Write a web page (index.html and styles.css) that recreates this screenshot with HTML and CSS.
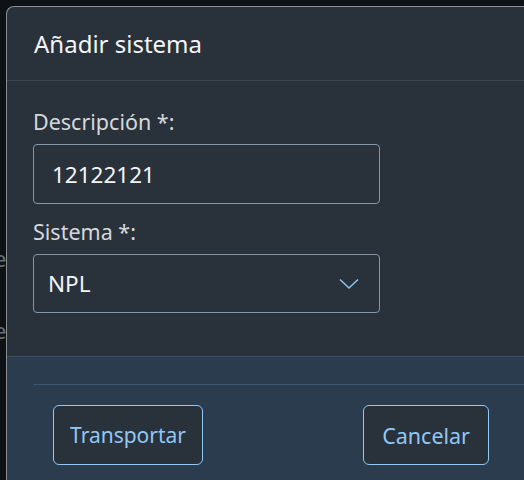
FILE: index.html
```html
<!DOCTYPE html>
<html lang="es">
<head>
<meta charset="utf-8">
<title>Añadir sistema</title>
<link rel="stylesheet" href="styles.css">
</head>
<body>
<div class="backdrop">
  <div class="bg-row">e</div>
  <div class="bg-row">e</div>
</div>
<div class="dialog">
  <header class="dlg-header">
    <h1 class="dlg-title">Añadir sistema</h1>
  </header>
  <section class="dlg-content">
    <label class="field-label">Descripción *:</label>
    <div class="field-box"><span class="field-value">12122121</span></div>
    <label class="field-label label-second">Sistema *:</label>
    <div class="field-box select-box">
      <span class="field-value">NPL</span>
      <svg class="chevron" width="20" height="12" viewBox="0 0 20 12"><path d="M1 1.5 L10 10 L19 1.5" fill="none" stroke="#8cc2f0" stroke-width="1.6"/></svg>
    </div>
  </section>
  <footer class="dlg-footer">
    <div class="footer-line"></div>
    <div class="footer-buttons">
      <button class="btn">Transportar</button>
      <button class="btn btn-cancel">Cancelar</button>
    </div>
  </footer>
</div>
</body>
</html>
```
FILE: styles.css
```css
html, body {
  margin: 0;
  padding: 0;
}
body {
  width: 524px;
  height: 480px;
  overflow: hidden;
  background: #0e1115;
  font-family: "Noto Sans", "Open Sans", sans-serif;
  position: relative;
}
.backdrop {
  padding-top: 243px;
  color: #6b6f74;
  font-size: 22px;
}
.bg-row {
  margin-left: -6px;
  height: 72px;
}
.dialog {
  position: absolute;
  left: 6px;
  top: 6px;
  width: 540px;
  height: 474px;
  box-sizing: border-box;
  background: #29313a;
  border-left: 1px solid #8b8e92;
  border-top: 1px solid #8b8e92;
  border-radius: 8px 0 0 0;
  display: flex;
  flex-direction: column;
  overflow: hidden;
}
.dlg-header {
  height: 73px;
  flex-shrink: 0;
  border-bottom: 1px solid #3a4652;
  display: flex;
  align-items: center;
  padding-left: 27px;
}
.dlg-title {
  margin: 0;
  font-size: 24px;
  font-weight: 400;
  color: #f4f5f6;
}
.dlg-content {
  height: 275px;
  flex-shrink: 0;
  padding: 27px 0 0 26px;
  box-sizing: border-box;
  display: flex;
  flex-direction: column;
  align-items: flex-start;
}
.field-label {
  font-size: 21.5px;
  color: #d5d9de;
  line-height: 28px;
  margin-bottom: 8px;
}
.label-second {
  margin-top: 14px;
  margin-bottom: 8px;
}
.field-box {
  width: 347px;
  height: 60px;
  box-sizing: border-box;
  border: 1px solid #8396ab;
  border-radius: 4px;
  display: flex;
  align-items: center;
  padding-left: 18px;
}
.select-box {
  height: 59px;
  padding-left: 14px;
  padding-right: 20px;
  justify-content: space-between;
}
.field-value {
  font-size: 22.5px;
  color: #f4f5f6;
}
.chevron {
  display: block;
}
.dlg-footer {
  flex: 1;
  background: #2c3c4f;
  border-top: 1px solid #3a5068;
  padding: 27px 0 0 26px;
}
.footer-line {
  height: 1px;
  background: #3e556e;
}
.footer-buttons {
  display: flex;
  padding: 20px 0 0 20px;
  width: 456px;
  box-sizing: border-box;
  justify-content: space-between;
}
.btn {
  font-family: "Noto Sans", "Open Sans", sans-serif;
  font-size: 21px;
  color: #91c8f6;
  background: #29313a;
  border: 1px solid #91c8f6;
  border-radius: 6px;
  height: 60px;
  padding: 0 16px;
  cursor: pointer;
}
.btn-cancel {
  font-size: 21.5px;
  padding: 0 18px;
}
```
